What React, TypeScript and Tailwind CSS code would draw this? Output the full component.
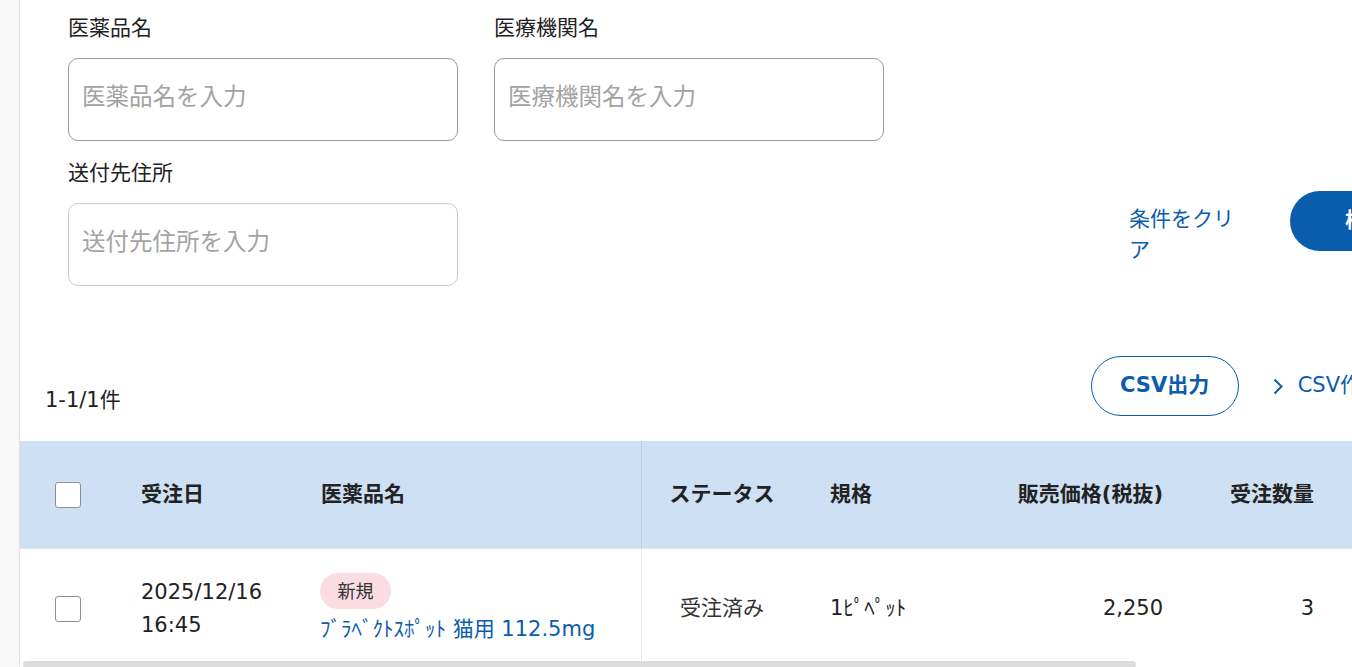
import React from 'react';

const font = "font-['DejaVu_Sans','Noto_Sans_CJK_JP',sans-serif]";

function Checkbox() {
  return <span className="block h-[26px] w-[26px] rounded-[3px] border border-[#8f8f8f] bg-white" />;
}

function Field({ label, placeholder, light }: { label: string; placeholder: string; light?: boolean }) {
  return (
    <div className="w-[390px]">
      <label className="block text-[21px] leading-[31px] text-[#222]">{label}</label>
      <input
        type="text"
        placeholder={placeholder}
        className={`mt-[14px] block h-[83px] w-full rounded-[10px] border bg-white px-[13px] pb-[5px] text-[23.5px] text-[#222] outline-none placeholder:text-[#a3a3a3] ${
          light ? 'border-[#c9c9d0]' : 'border-[#9c9c9c]'
        }`}
      />
    </div>
  );
}

export default function App() {
  return (
    <div className={`flex h-[667px] w-[1352px] overflow-hidden bg-white ${font}`}>
      {/* left rail */}
      <div className="w-[20px] shrink-0 border-r border-[#e2e2e2] bg-[#f8f8f8]" />

      <div className="min-w-0 flex-1 overflow-hidden">
        {/* Search form */}
        <div className="w-[1422px] pl-[48px] pt-[13px]">
          <div className="flex gap-[36px]">
            <Field label="医薬品名" placeholder="医薬品名を入力" />
            <Field label="医療機関名" placeholder="医療機関名を入力" />
          </div>
          <div className="mt-[17px] flex items-start">
            <Field label="送付先住所" placeholder="送付先住所を入力" light />
            <div className="ml-auto flex items-start gap-[41px] pt-[33px]">
              <button className="mt-[13px] w-[120px] text-left text-[21px] leading-[31px] text-[#0a5cad]">
                条件をクリア
              </button>
              <button className="h-[60px] w-[152px] rounded-full bg-[#0a5cad] text-[21px] font-bold text-white">
                検索
              </button>
            </div>
          </div>
        </div>

        {/* Result bar */}
        <div className="mt-[70px] flex w-[1404px] items-end pl-[25px]">
          <div className="flex-1 text-[21px] leading-[31px] text-[#222]">1-1/1件</div>
          <div className="flex items-center gap-[34px]">
            <button className="h-[60px] w-[148px] rounded-full border border-[#0a5cad] text-[21px] font-bold text-[#0a5cad]">
              CSV出力
            </button>
            <a className="flex items-center gap-[15px] text-[21px] text-[#0a5cad]">
              <svg width="10" height="17" viewBox="0 0 10 17" fill="none">
                <polyline points="1.5,1.5 8.5,8.5 1.5,15.5" stroke="#0a5cad" strokeWidth="2" />
              </svg>
              <span className="whitespace-nowrap">CSV作成履歴</span>
            </a>
          </div>
        </div>

        {/* Table */}
        <div className="mt-[25px]">
          <div className="h-[220px] overflow-hidden">
            <div className="w-[1700px]">
              {/* header */}
              <div className="flex h-[108px] items-center border-b border-[#e6e6e6] bg-[#cde0f4] text-[21px] font-bold text-[#222]">
                <div className="flex w-[91px] shrink-0 pl-[35px]">
                  <Checkbox />
                </div>
                <div className="w-[180px] shrink-0 pl-[30px]">受注日</div>
                <div className="flex h-full w-[351px] shrink-0 items-center border-r border-[#bccfe3] pl-[30px]">医薬品名</div>
                <div className="w-[160px] shrink-0 text-center">ステータス</div>
                <div className="w-[188px] shrink-0 pl-[28px]">規格</div>
                <div className="w-[203px] shrink-0 pr-[30px] text-right">販売価格(税抜)</div>
                <div className="w-[151px] shrink-0 pr-[30px] text-right">受注数量</div>
                <div className="w-[200px] shrink-0 pl-[30px]">出荷予定日</div>
              </div>
              {/* row */}
              <div className="flex h-[120px] items-center text-[21px] text-[#222]">
                <div className="flex w-[91px] shrink-0 pl-[35px]">
                  <Checkbox />
                </div>
                <div className="w-[180px] shrink-0 pl-[30px] leading-[33px]">
                  2025/12/16
                  <br />
                  16:45
                </div>
                <div className="flex h-full w-[351px] shrink-0 flex-col justify-center border-r border-[#e6e6e6] pl-[29px]">
                  <span className="flex h-[36px] w-[71px] items-center justify-center rounded-full bg-[#f9dde3] text-[18px] text-[#333]">
                    新規
                  </span>
                  <a className="mt-[5px] whitespace-nowrap leading-[31px] text-[#0a5cad]">ﾌﾞﾗﾍﾞｸﾄｽﾎﾟｯﾄ 猫用 112.5mg</a>
                </div>
                <div className="w-[160px] shrink-0 text-center text-[#333]">受注済み</div>
                <div className="w-[188px] shrink-0 pl-[28px]">1ﾋﾟﾍﾟｯﾄ</div>
                <div className="w-[203px] shrink-0 pr-[30px] text-right">2,250</div>
                <div className="w-[151px] shrink-0 pr-[30px] text-right">3</div>
                <div className="w-[200px] shrink-0 pl-[30px]">2025/12/18</div>
              </div>
            </div>
          </div>
          {/* horizontal scrollbar */}
          <div className="h-[7px] pl-[3px]">
            <div className="h-[7px] w-[1113px] rounded-full bg-[#dcdcdc]" />
          </div>
        </div>
      </div>
    </div>
  );
}
